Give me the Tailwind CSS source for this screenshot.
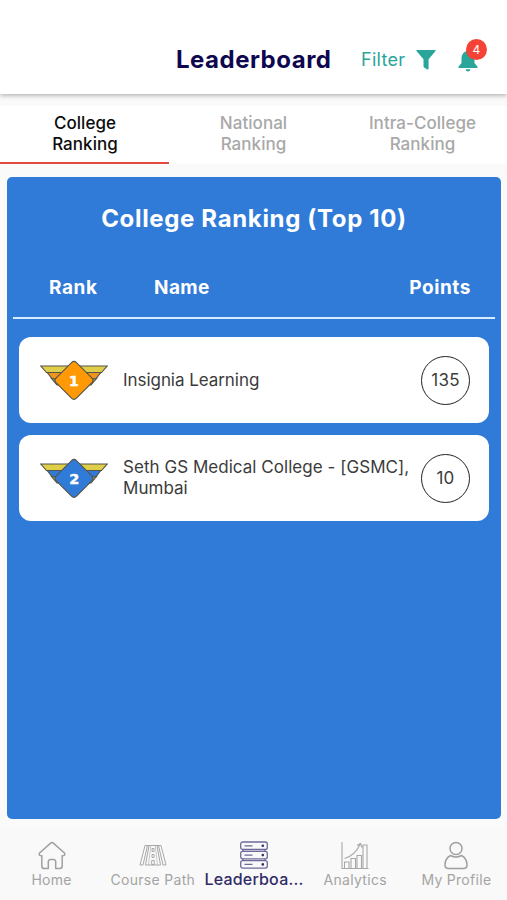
<!DOCTYPE html>
<html lang="en">
<head>
<meta charset="utf-8">
<title>Leaderboard</title>
<script src="https://cdn.jsdelivr.net/npm/@tailwindcss/browser@4"></script>
</head>
<body class="bg-[#fafafa] font-['Inter',sans-serif]">
<div class="w-[507px] h-[900px] flex flex-col overflow-hidden">
  <header class="relative z-10 h-[94px] shrink-0 bg-white flex pt-[42px] pl-[176px] shadow-[0_1px_5px_rgba(0,0,0,0.35)]">
    <h1 class="w-[185px] text-[24px] leading-[35px] font-bold tracking-[0.5px] text-[#0e0750] whitespace-nowrap">Leaderboard</h1>
    <span class="w-[55px] text-[18px] leading-[35px] tracking-[0.3px] text-[#2aa59a]">Filter</span>
    <svg class="w-5 h-5 mt-[8px]" viewBox="0 0 20 20" fill="#2aa59a"><path d="M.8 0H19.2Q20 .2 19.5 1L12.6 9.3V18.6Q12.4 19.8 11.2 19.5L8.2 17.5Q7.5 17 7.5 16.2V9.3L.5 1Q0 .2 .8 0Z"/></svg>
    <div class="relative ml-[21px] mt-[6px] w-[22px] h-6">
      <svg class="w-[22px] h-6" viewBox="0 0 22 24" fill="#2aa59a"><path d="M9.5 3V2Q11 0 12.5 2V3Q17 4.5 17.5 10V15L20.5 18.8V20H1.500V18.8L4.5 15V10Q5 4.5 9.5 3ZM8.5 21.2H13.5Q13 23.600 11 23.600Q9 23.600 8.500 21.200Z"/></svg>
      <span class="absolute left-[9px] -top-[9px] w-[21px] h-[21px] rounded-full bg-[#f44336] text-white text-[12px] leading-[22px] text-center">4</span>
    </div>
  </header>
  <nav class="h-[70px] shrink-0 grid grid-cols-3 pt-[12px] bg-[#fafafa] text-center text-[17px] leading-[21px] font-medium tracking-[0.05px] text-[#a8a8a8]">
    <div class="bg-white border-b-[2.5px] border-[#e5483e] w-[170px] pt-[7px] text-[#0c0c0c]">College<br>Ranking</div>
    <div class="bg-white pt-[7px]">National<br>Ranking</div>
    <div class="bg-white pt-[7px]">Intra-College<br>Ranking</div>
  </nav>
  <main class="mt-[13px] ml-[7px] w-[494px] h-[642px] shrink-0 rounded-[5px] bg-[#317bd8] px-1.5 text-white">
    <h2 class="pt-[26px] text-center text-[24px] leading-[32px] font-bold tracking-[0.65px]">College Ranking (Top 10)</h2>
    <div class="flex mt-[33px] h-[51px] border-b-2 border-[#d9ecff] pl-[36px] pr-[24px] text-[19px] leading-[40px] font-bold tracking-[0.6px]">
      <span class="w-[105px]">Rank</span><span class="flex-1 tracking-[0.4px]">Name</span><span>Points</span>
    </div>
    <div class="mt-[18px] px-1.5 flex flex-col gap-[12px] text-[#3b3b3b] text-[17px] leading-[21px] tracking-[0.2px]">
      <div class="h-[86px] rounded-[12px] bg-white flex items-center pl-[21px] pr-[19px]">
        <svg class="w-[68px] h-10 shrink-0" viewBox="0 0 68 40" stroke="#55534b" stroke-width="1.1">
          <path d="M11.500 18.500H56.500L51 25H17Z" fill="#a3a23e"/><path d="M7 12.300H61L56 18.700H12Z" fill="#ef941c"/><path d="M.8 6H67.200L61.500 12.500H6.500Z" fill="#dfce48"/>
          <rect x="19.700" y="6.100" width="28.600" height="28.600" rx="3.500" transform="rotate(45 34 20.400)" fill="#ff9905"/>
          <text x="34" y="25.500" text-anchor="middle" font-family="DejaVu Sans" font-size="14.500" font-weight="700" fill="#fff" stroke="#fff" stroke-width=".4">1</text>
        </svg>
        <span class="ml-[15px] flex-1 tracking-[-0.05px]">Insignia Learning</span>
        <span class="w-[49px] h-[49px] shrink-0 rounded-full border border-[#222] flex items-center justify-center">135</span>
      </div>
      <div class="h-[86px] rounded-[12px] bg-white flex items-center pl-[21px] pr-[19px]">
        <svg class="w-[68px] h-10 shrink-0" viewBox="0 0 68 40" stroke="#55534b" stroke-width="1.1">
          <path d="M11.500 18.500H56.500L51 25H17Z" fill="#b4a340"/><path d="M7 12.300H61L56 18.700H12Z" fill="#317bd8"/><path d="M.8 6H67.200L61.500 12.500H6.500Z" fill="#dfce48"/>
          <rect x="19.700" y="6.100" width="28.600" height="28.600" rx="3.500" transform="rotate(45 34 20.400)" fill="#317bd8"/>
          <text x="34.500" y="25.500" text-anchor="middle" font-family="DejaVu Sans" font-size="14.500" font-weight="700" fill="#fff" stroke="#fff" stroke-width=".4">2</text>
        </svg>
        <span class="ml-[15px] flex-1 whitespace-nowrap tracking-[0.04px]">Seth GS Medical College - [GSMC],<br>Mumbai</span>
        <span class="w-[49px] h-[49px] shrink-0 rounded-full border border-[#222] flex items-center justify-center">10</span>
      </div>
    </div>
  </main>
  <footer class="mt-[9px] h-[72px] shrink-0 grid grid-cols-5 bg-[#f9f9f9] pt-[12px] pl-px text-center text-[14px] leading-[20px] tracking-[0.3px] text-[#a4a4a4] whitespace-nowrap">
    <div class="flex flex-col items-center">
      <svg class="w-7 h-[30px]" viewBox="0 0 28 30" fill="none" stroke="#a0a0a0" stroke-width="1.5" stroke-linejoin="round"><path d="M14 2.500Q14.800 2.500 15.400 3.100L26.400 13Q27.500 14.300 26.200 15.400Q25.500 15.900 24.200 15.700V26Q24.200 28.500 21.700 28.500H17.700V21.500Q17.500 19.500 15.500 19.500H12.500Q10.500 19.500 10.300 21.500V28.500H6.300Q3.800 28.500 3.800 26V15.700Q2.500 15.900 1.800 15.400Q.5 14.300 1.600 13L12.600 3.100Q13.200 2.500 14 2.500Z"/></svg>
      <span>Home</span>
    </div>
    <div class="flex flex-col items-center">
      <svg class="w-7 h-[30px]" viewBox="0 0 28 30" fill="none" stroke="#a8a8a8" stroke-width="1"><path d="M6 5.500H22M6 5.500L1 25H4L8.500 5.500M22 5.500L27 25H24L19.500 5.500M10 5.500L6.500 25H21.500L18 5.500M13 8.500H15V11.500H13ZM13 14.500H15V17.500H13ZM12.700 20.500H15.300V24.500H12.700Z"/><path d="M11.800 5.500L9.500 25M16.200 5.500L18.500 25" stroke-width=".6"/></svg>
      <span>Course Path</span>
    </div>
    <div class="flex flex-col items-center text-[#302b67]">
      <svg class="w-7 h-[30px]" viewBox="0 0 28 30" fill="none" stroke="#6d6a9b" stroke-width="1.3"><rect x=".7" y="2" width="26.600" height="7.500" rx="2"/><rect x=".7" y="11.300" width="26.600" height="7.500" rx="2"/><rect x=".7" y="20.600" width="26.600" height="7.500" rx="2"/><path d="M4.500 5.800H12.500M4.500 15.100H12.500M4.500 24.400H12.500M3 9.500V11.300M25 9.500V11.300M3 18.800V20.600M25 18.800V20.600"/><g fill="#302b67" stroke="none"><circle cx="22.800" cy="5.800" r="1.300"/><circle cx="22.800" cy="15.100" r="1.300"/><circle cx="22.800" cy="24.400" r="1.300"/></g></svg>
      <span class="text-[16px] leading-[19px] font-medium tracking-[0.2px]">Leaderboa...</span>
    </div>
    <div class="flex flex-col items-center">
      <svg class="w-7 h-[30px]" viewBox="0 0 28 30" fill="none" stroke="#a8a8a8" stroke-width="1.1"><path d="M1 2V28.500H27.500M3.500 28.500V22H8V28.500M10 28.500V18.500H14.500V28.500M16 28.500V15.500H20.500V28.500M22 28.500V5H26V28.500M3.500 18.500Q14 15.500 19 4.500M16 5.500L19.500 3.500L21 7.500"/></svg>
      <span>Analytics</span>
    </div>
    <div class="flex flex-col items-center">
      <svg class="w-7 h-[30px]" viewBox="0 0 28 30" fill="none" stroke="#a0a0a0" stroke-width="1.500"><circle cx="14" cy="8.500" r="6"/><path d="M8.500 15.500Q3 18.500 3 25Q3 28.500 6.500 28.500H21.500Q25 28.500 25 25Q25 18.500 19.500 15.500Q14 18.500 8.500 15.500Z"/></svg>
      <span>My Profile</span>
    </div>
  </footer>
</div>
</body>
</html>
